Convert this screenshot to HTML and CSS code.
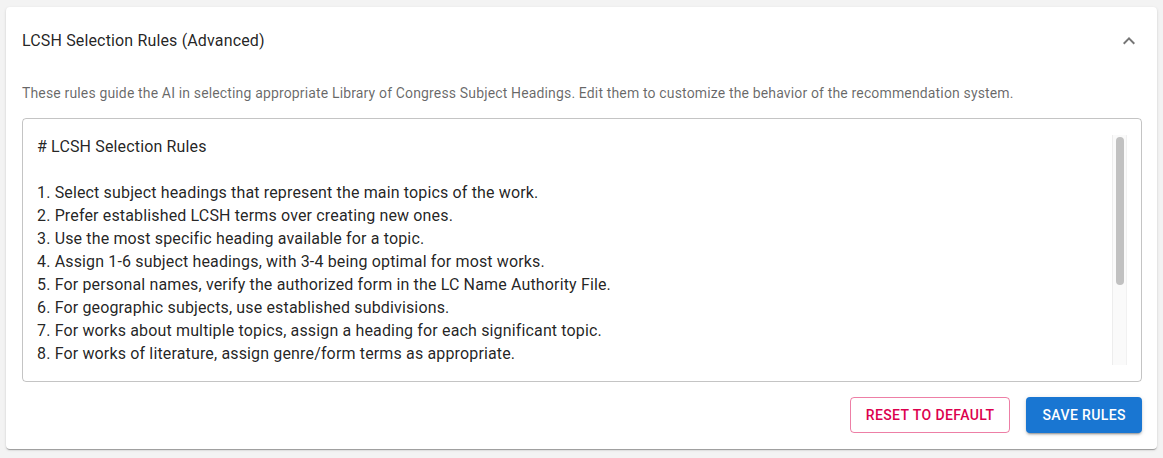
FILE: index.html
```html
<!DOCTYPE html>
<html lang="en">
<head>
    <meta charset="UTF-8">
    <meta name="viewport" content="width=device-width, initial-scale=1.0">
    <title>LCSH Selection Rules</title>
    <link rel="stylesheet" href="styles.css">
</head>
<body>
    <div class="accordion">
        <div class="summary">
            <span class="summary-title">LCSH Selection Rules (Advanced)</span>
            <svg class="expand-icon" viewBox="0 0 24 24" width="24" height="24">
                <path d="M12 8l-6 6 1.41 1.41L12 10.83l4.59 4.58L18 14z"></path>
            </svg>
        </div>
        <div class="details">
            <p class="hint">These rules guide the AI in selecting appropriate Library of Congress Subject Headings. Edit them to customize the behavior of the recommendation system.</p>
            <div class="field">
                <textarea class="rules" rows="10" spellcheck="false"># LCSH Selection Rules

1. Select subject headings that represent the main topics of the work.
2. Prefer established LCSH terms over creating new ones.
3. Use the most specific heading available for a topic.
4. Assign 1-6 subject headings, with 3-4 being optimal for most works.
5. For personal names, verify the authorized form in the LC Name Authority File.
6. For geographic subjects, use established subdivisions.
7. For works about multiple topics, assign a heading for each significant topic.
8. For works of literature, assign genre/form terms as appropriate.
9. Use form subdivisions (e.g. --Fiction, --History) where applicable.
10. Avoid assigning both a broad heading and its narrower term.
11. Consider chronological subdivisions for historical works.
12. Order headings by relevance, with the primary topic first.
13. Check headings against current LCSH to avoid obsolete terms.</textarea>
                <div class="scroll-track">
                    <div class="scroll-thumb"></div>
                </div>
            </div>
        </div>
        <div class="actions">
            <button class="btn btn-outlined" type="button">Reset to Default</button>
            <button class="btn btn-contained" type="button">Save Rules</button>
        </div>
    </div>
</body>
</html>
```

FILE: styles.css
```css
body {
    margin: 0;
    padding: 7px 6px 8px 6px;
    background-color: #f3f3f3;
    font-family: Roboto, "Liberation Sans", sans-serif;
    color: rgba(0, 0, 0, 0.87);
}
.accordion {
    background-color: #fff;
    border-radius: 4px;
    box-shadow: 0px 2px 1px -1px rgba(0,0,0,0.2), 0px 1px 1px 0px rgba(0,0,0,0.14), 0px 1px 3px 0px rgba(0,0,0,0.12);
}
.summary {
    display: flex;
    align-items: center;
    justify-content: space-between;
    padding: 22px 16px 20px 16px;
}
.summary-title {
    font-size: 16px;
    line-height: 24px;
    letter-spacing: 0.00938em;
}
.expand-icon {
    fill: rgba(0, 0, 0, 0.54);
}
.details {
    padding: 10px 15px 0 16px;
}
.hint {
    margin: 0 0 15px 0;
    font-size: 14px;
    line-height: 20px;
    letter-spacing: 0.01071em;
    color: rgba(0, 0, 0, 0.6);
}
.field {
    display: flex;
    border: 1px solid rgba(0, 0, 0, 0.23);
    border-radius: 4px;
    padding: 15.5px 14px 16px 14px;
}
.rules {
    flex: 1;
    display: block;
    height: 230px;
    margin: 0;
    padding: 0;
    border: none;
    outline: none;
    resize: none;
    font-family: inherit;
    font-size: 16px;
    line-height: 23px;
    letter-spacing: 0.00938em;
    color: rgba(0, 0, 0, 0.87);
    overflow: hidden;
    background: transparent;
}
/* drawn scrollbar, the headless browser hides the native one */
.scroll-track {
    width: 13px;
    height: 230px;
    background-color: #fafafa;
    border-left: 1px solid #ededed;
    border-right: 1px solid #f1f1f1;
}
.scroll-thumb {
    width: 8px;
    height: 148px;
    margin: 2px 0 0 3px;
    background-color: #c1c1c1;
    border-radius: 4px;
}
.actions {
    display: flex;
    justify-content: flex-end;
    gap: 16px;
    padding: 15px 15px 16px 16px;
}
.btn {
    font-family: inherit;
    font-size: 14px;
    font-weight: 500;
    letter-spacing: 0.02857em;
    text-transform: uppercase;
    line-height: 24px;
    border-radius: 4px;
    cursor: pointer;
}
.btn-outlined {
    padding: 5px 15px;
    background-color: transparent;
    color: #dc004e;
    border: 1px solid rgba(220, 0, 78, 0.5);
}
.btn-contained {
    padding: 6px 16px;
    background-color: #1976d2;
    color: #fff;
    border: none;
    box-shadow: 0px 3px 1px -2px rgba(0,0,0,0.2), 0px 2px 2px 0px rgba(0,0,0,0.14), 0px 1px 5px 0px rgba(0,0,0,0.12);
}
```
